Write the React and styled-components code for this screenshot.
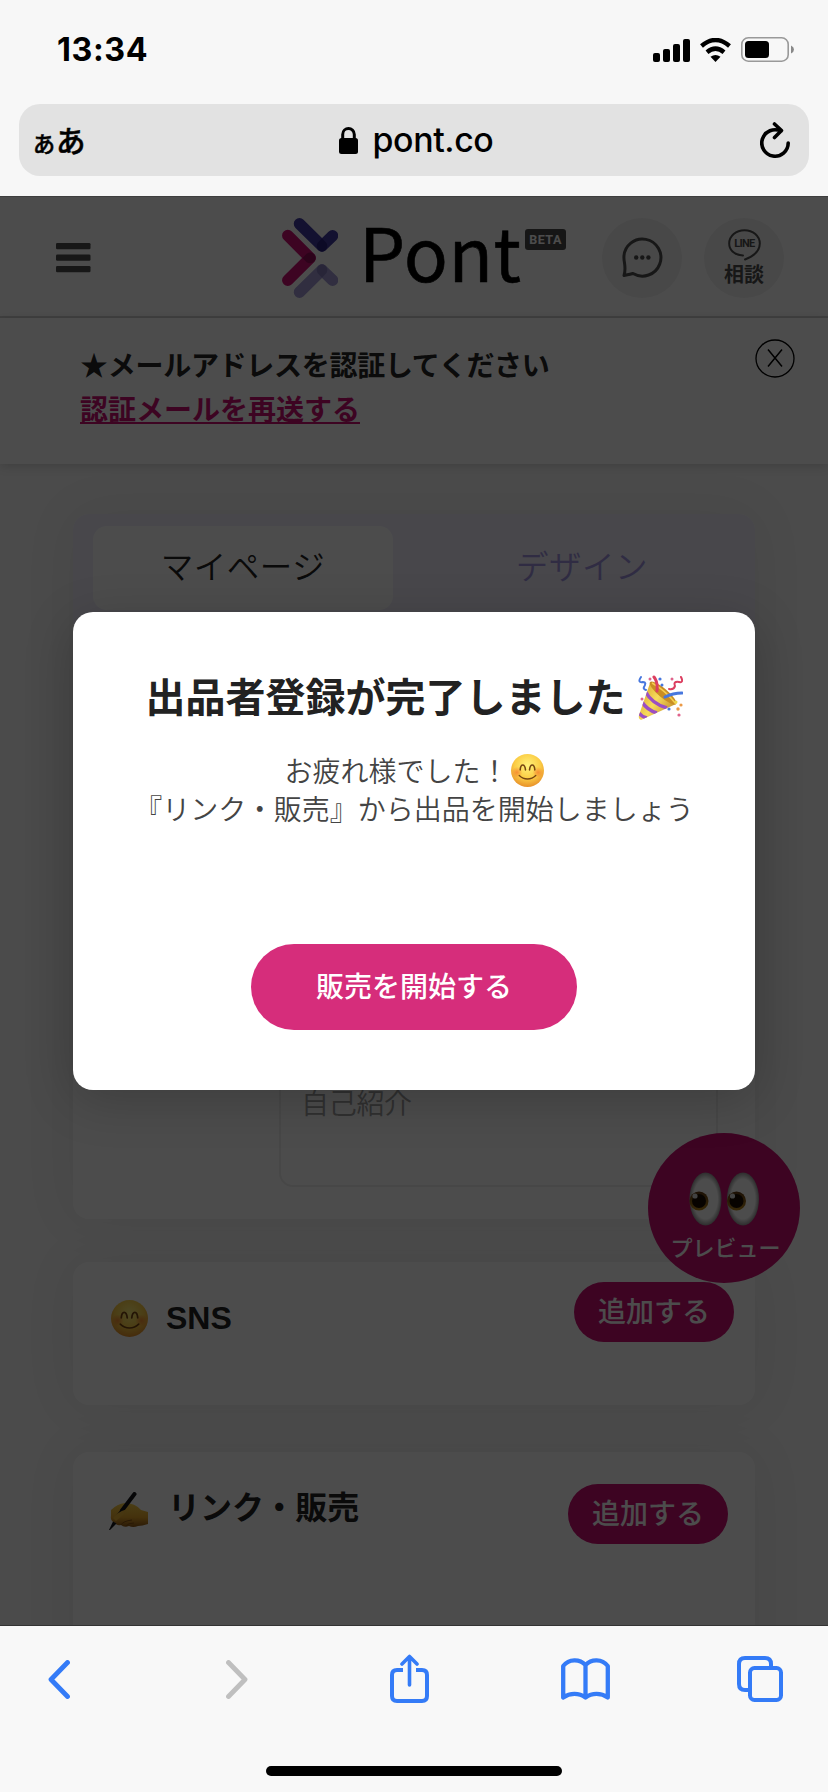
import React from "react";
import styled, { createGlobalStyle } from "styled-components";

const GlobalStyle = createGlobalStyle`
  *, *::before, *::after { box-sizing: border-box; }
  body { margin: 0; background: #f7f7f7; }
  button { border: 0; padding: 0; margin: 0; background: none; font: inherit; color: inherit; }
  svg { display: block; flex: none; }
`;

const JP = `"Liberation Sans", "Noto Sans CJK JP", sans-serif`;

const Phone = styled.div`
  width: 828px;
  height: 1792px;
  display: flex;
  flex-direction: column;
  overflow: hidden;
  background: #f7f7f7;
  font-family: ${JP};
`;

const StatusBar = styled.div`
  height: 104px;
  padding: 0 34px 5px 57px;
  display: flex;
  align-items: center;
  justify-content: space-between;
`;
const Clock = styled.div`
  padding-top: 1px;
  font: 700 32.3px/40px Inter, sans-serif;
  letter-spacing: 0.6px;
  color: #000;
`;
const StatusIcons = styled.div`
  display: flex;
  align-items: center;
  gap: 9px;
`;

const AddressBar = styled.div`
  height: 72px;
  margin: 0 19px 20px;
  padding: 0 19px 0 14px;
  border-radius: 21px;
  background: #e2e2e2;
  display: grid;
  grid-template-columns: 1fr auto 1fr;
  align-items: center;
  color: #000;
`;
const TextSize = styled.div`
  font: 500 29.5px/40px "Noto Sans CJK JP", sans-serif;
  -webkit-text-stroke: 0.5px #000;
  display: flex;
  align-items: baseline;
  gap: 1px;
  small { font-size: 22px; }
`;
const Host = styled.div`
  margin-left: 9px;
  display: flex;
  align-items: center;
  gap: 15px;
  font: 500 33.9px/44px Inter, sans-serif;
  letter-spacing: -0.4px;
`;
const Reload = styled.button`
  justify-self: end;
`;

const Viewport = styled.div`
  position: relative;
  height: 1430px;
  flex: none;
  overflow: hidden;
  background: #fafafa;
  border-bottom: 1px solid #333;
`;
const Header = styled.header`
  height: 122px;
  padding: 2px 44px 0 56px;
  background: #fff;
  border-top: 1px solid #d0d0d0;
  border-bottom: 2px solid #d4d4d4;
  display: flex;
  align-items: center;
`;
const Brand = styled.div`
  margin-left: 191px;
  display: flex;
  align-items: center;
  height: 80px;
`;
const BrandName = styled.div`
  margin-left: 21px;
  width: 166px;
  height: 80px;
  font: 400 73px/65px "Noto Sans CJK JP", sans-serif;
  letter-spacing: 0.5px;
  -webkit-text-stroke: 0.6px #000;
  color: #000;
  white-space: nowrap;
`;
const Beta = styled.div`
  align-self: flex-start;
  margin-top: 11px;
  width: 41px;
  height: 21px;
  border-radius: 3px;
  background: #4b4b4b;
  color: #fff;
  font: 700 12.5px/22px Roboto, sans-serif;
  letter-spacing: 0.5px;
  text-align: center;
`;
const RoundButton = styled.button`
  width: 80px;
  height: 80px;
  margin-left: ${(p) => p.$gap}px;
  border-radius: 50%;
  background: #f1f1f1;
  color: #4d4d4d;
  display: flex;
  flex-direction: column;
  align-items: center;
  justify-content: center;
  gap: 1px;
  font: 700 20px/24px "Noto Sans CJK JP", sans-serif;
`;

const Notice = styled.section`
  position: relative;
  height: 146px;
  padding: 27px 33px 0 80px;
  background: #fff;
  box-shadow: 0 2px 10px rgba(0, 0, 0, 0.16);
  display: flex;
  justify-content: space-between;
  font-weight: 700;
  font-size: 28px;
  line-height: 44px;
  letter-spacing: -0.28px;
  color: #262626;
`;
const NoticeText = styled.p`
  margin: 0;
  white-space: nowrap;
`;
const ResendLink = styled.a`
  display: block;
  width: 280px;
  height: 35px;
  line-height: 44px;
  letter-spacing: 0;
  color: #cb0e72;
  border-bottom: 2px solid #cb0e72;
`;
const CloseIcon = styled.button`
  height: 38px;
  margin-top: -6px;
`;

const Content = styled.main`
  padding: 50px 73px 0;
  display: flex;
  flex-direction: column;
`;
const Card = styled.section`
  height: ${(p) => p.$height}px;
  margin-bottom: ${(p) => p.$after}px;
  padding: ${(p) => p.$pad};
  border-radius: 16px;
  background: #fff;
  box-shadow: 0 0 54px rgba(0, 0, 0, 0.07);
  display: flex;
  justify-content: space-between;
  align-items: flex-start;
`;
const ProfileFrame = styled.div`
  height: 705px;
  margin-bottom: 43px;
  border-radius: 16px;
  box-shadow: 0 0 54px rgba(0, 0, 0, 0.07);
`;
const ProfileCard = styled.section`
  height: 100%;
  border-radius: 16px;
  overflow: hidden;
  background: #fff;
  display: flex;
  flex-direction: column;
`;
const Tabs = styled.nav`
  height: 110px;
  flex: none;
  padding: 12px 20px;
  background: #f0eefc;
  display: grid;
  grid-template-columns: 300px 1fr;
`;
const Tab = styled.button`
  height: 84px;
  padding-bottom: 6px;
  border-radius: 14px;
  background: ${(p) => (p.$active ? "#fff" : "transparent")};
  color: ${(p) => (p.$active ? "#222" : "#a095e0")};
  font: 350 32.5px/44px "Noto Sans CJK JP", sans-serif;
  letter-spacing: 0.5px;
  text-indent: ${(p) => (p.$active ? 0 : 36)}px;
`;
const Bio = styled.div`
  width: 439px;
  height: 160px;
  flex: none;
  margin: 403px 37px 0 auto;
  padding: 53px 20px 0;
  border: 2px solid #eee;
  border-radius: 14px;
  color: #a0a0a0;
  font: 350 28px/40px "Noto Sans CJK JP", sans-serif;
  letter-spacing: -0.3px;
`;
const SectionTitle = styled.h2`
  margin: ${(p) => p.$top}px 0 0;
  display: flex;
  align-items: center;
  gap: ${(p) => p.$gap}px;
  height: 40px;
  font-size: 32px;
  line-height: 40px;
  font-weight: 700;
  color: #242424;
`;
const IconDrop = styled.span`
  padding-top: 5px;
`;
const AddButton = styled.button`
  width: 160px;
  height: 60px;
  padding-bottom: 4px;
  border-radius: 30px;
  background: #cb0e72;
  color: #fff;
  font: 500 28px/40px "Noto Sans CJK JP", sans-serif;
`;
const PreviewButton = styled.button`
  position: absolute;
  left: 648px;
  top: 937px;
  width: 152px;
  height: 150px;
  padding: 39px 0 0;
  border-radius: 50%;
  background: #cb0e72;
  color: #fff;
  display: flex;
  flex-direction: column;
  align-items: center;
  gap: 6px;
  font: 500 22px/28px "Noto Sans CJK JP", sans-serif;
  white-space: nowrap;
`;
const PreviewLabel = styled.span`
  padding-left: 3px;
`;

const Overlay = styled.div`
  position: absolute;
  inset: 0;
  padding-top: 416px;
  background: rgba(0, 0, 0, 0.7);
  display: flex;
  justify-content: center;
  align-items: flex-start;
`;
const Modal = styled.div`
  width: 682px;
  height: 478px;
  padding-top: 60px;
  border-radius: 20px;
  background: #fff;
  box-shadow: 0 10px 50px rgba(0, 0, 0, 0.2);
  display: flex;
  flex-direction: column;
  align-items: center;
`;
const ModalTitle = styled.h1`
  margin: 0;
  display: flex;
  align-items: center;
  gap: 12px;
  font-size: 40px;
  line-height: 52px;
  font-weight: 700;
  color: #222;
`;
const ModalText = styled.div`
  margin-top: 27px;
  display: flex;
  flex-direction: column;
  align-items: center;
  font: 350 28px/38px "Noto Sans CJK JP", sans-serif;
  color: #444;
  white-space: nowrap;
`;
const TextLine = styled.div`
  height: 38px;
  display: flex;
  align-items: center;
  gap: 2px;
`;
const StartButton = styled.button`
  width: 326px;
  height: 86px;
  margin-top: 117px;
  padding-bottom: 5px;
  border-radius: 43px;
  background: #d62d7b;
  color: #fff;
  font: 500 28px/40px "Noto Sans CJK JP", sans-serif;
`;

const BrowserBar = styled.nav`
  flex: 1;
  background: #f8f8f8;
  display: flex;
  flex-direction: column;
  align-items: center;
  justify-content: space-between;
  padding: 25px 0 16px;
`;
const BarIcons = styled.div`
  width: 100%;
  height: 56px;
  padding-right: 9px;
  display: grid;
  grid-template-columns: repeat(5, 175.5px);
  justify-content: center;
  place-items: center;
`;
const ForwardSlot = styled.span`
  padding-left: 5px;
`;
const HomeIndicator = styled.div`
  width: 296px;
  height: 10px;
  border-radius: 5px;
  background: #000;
`;

const Smile = ({ size }) => (
  <svg width={size} height={size} viewBox="0 0 36 36">
    <defs>
      <radialGradient id="face" cx=".5" cy=".35" r=".65">
        <stop offset="0" stopColor="#fff27a" />
        <stop offset=".6" stopColor="#fbcd45" />
        <stop offset="1" stopColor="#e8912a" />
      </radialGradient>
      <radialGradient id="cheek">
        <stop offset="0" stopColor="#f4722b" stopOpacity=".7" />
        <stop offset="1" stopColor="#f4722b" stopOpacity="0" />
      </radialGradient>
    </defs>
    <circle cx="18" cy="18" r="18" fill="url(#face)" />
    <circle cx="6.5" cy="20" r="6" fill="url(#cheek)" />
    <circle cx="29.5" cy="20" r="6" fill="url(#cheek)" />
    <g fill="none" stroke="#764512" strokeLinecap="round">
      <path d="M10 17.3c.6-7 5-7 5.800 0M20.200 17.300c.8-7 5.200-7 5.800 0" strokeWidth="1.700" />
      <path d="M9 23.500c5 5 13 5 18 0" strokeWidth="1.500" />
    </g>
  </svg>
);

const Party = () => (
  <svg width="45" height="46" viewBox="0 0 45 46">
    <defs>
      <linearGradient id="cone" x1="0" y1=".2" x2="1" y2=".8">
        <stop offset="0" stopColor="#d9a52c" />
        <stop offset=".45" stopColor="#f7dc5c" />
        <stop offset="1" stopColor="#bd8425" />
      </linearGradient>
      <clipPath id="coneClip"><path d="M12 8 38 29 3 45Q0 44 1 40Z" /></clipPath>
    </defs>
    <path d="M12 8 38 29 3 45Q0 44 1 40Z" fill="url(#cone)" />
    <g clipPath="url(#coneClip)" fill="none" stroke="#9b4fc4" strokeWidth="3.400">
      <path d="M7 16Q14 29 29 33M4 27Q9 35 19 38M1 38Q4 42 9 43" />
    </g>
    <ellipse cx="25" cy="18" rx="17" ry="4.500" transform="rotate(40 25 18)" fill="#c98e23" />
    <path d="M14 8Q27 15 38 29" fill="none" stroke="#f5cd50" strokeWidth="1.500" />
    <g fill="none" strokeWidth="3" strokeLinecap="round">
      <path d="M16 2Q20 7 19 16" stroke="#dc3f60" />
      <path d="M27 22Q35 18 44 18" stroke="#4777de" />
      <path d="M3 2Q-1 8 5 7Q9 7 6 12Q5 14 8 15" stroke="#4777de" strokeWidth="2" />
      <path d="M43 2Q46 8 41 7Q35 6 37 11Q36 15 31 14" stroke="#dc3f60" strokeWidth="2" />
    </g>
    <g fill="#4777de"><circle cx="22" cy="4" r="1.600" /><circle cx="24" cy="10" r="1.500" /><circle cx="31" cy="34" r="1.600" /></g>
    <g fill="#df638b"><circle cx="12" cy="4" r="1.500" /><circle cx="34" cy="4" r="1.500" /><circle cx="4" cy="24" r="1.500" /><circle cx="41" cy="40" r="1.600" /></g>
    <g fill="#eb9a47"><circle cx="40" cy="34" r="1.700" /><circle cx="43" cy="30" r="1.600" /></g>
    <circle cx="38" cy="27" r="1.500" fill="#e9d84a" />
  </svg>
);

const WritingHand = () => (
  <svg width="40" height="38" viewBox="0 0 40 38">
    <defs>
      <linearGradient id="skin" x1="0" y1="0" x2="0" y2="1">
        <stop offset="0" stopColor="#fbd24a" />
        <stop offset=".6" stopColor="#e5a52b" />
        <stop offset="1" stopColor="#8f5715" />
      </linearGradient>
    </defs>
    <path d="M2 18Q8 12 16 11Q26 11 32 18L39 20V32Q33 34 29 34Q24 36 20 34Q15 36 12 33Q8 34 6 31Q1 29 2 24Z" fill="url(#skin)" />
    <path d="M12 33Q14 29 23 28M17 34Q19 31 25 31" fill="none" stroke="#8a5514" strokeWidth="1" />
    <path d="M25.500 2 13 18.500" fill="none" stroke="#15151a" strokeWidth="4" strokeLinecap="round" />
    <path d="M13 18.500 7 26" fill="none" stroke="#15151a" strokeWidth="3" />
    <path d="M4 29.500 7.500 31.500 1 38H0Z" fill="#15151a" />
    <path d="M4 26Q8 20 17 17.500L15 22 7 29Z" fill="#edb437" />
  </svg>
);

const Eyes = () => (
  <svg width="70" height="54" viewBox="0 0 70 54">
    <defs>
      <radialGradient id="ball"><stop offset=".75" stopColor="#fff" /><stop offset="1" stopColor="#999" /></radialGradient>
      <linearGradient id="iris" x1="0" y1="0" x2="0" y2="1"><stop offset="0" stopColor="#5d3610" /><stop offset="1" stopColor="#b9881c" /></linearGradient>
    </defs>
    {[16, 53.5].map((x) => (
      <g key={x}>
        <ellipse cx={x + 0.5} cy="27" rx="16" ry="26.500" fill="url(#ball)" />
        <circle cx={x - 6} cy="29" r="9.500" fill="url(#iris)" />
        <circle cx={x - 6} cy="29" r="7" fill="#180d02" />
        <circle cx={x - 10} cy="24" r="2.600" fill="#ddd" />
      </g>
    ))}
  </svg>
);

const Logo = () => (
  <svg width="56" height="80" viewBox="0 0 56 80" fill="none" strokeWidth="11.500" strokeLinecap="round" strokeLinejoin="round">
    <path d="M17.500 5.800 40 28 50.500 17.800" stroke="#423ba0" />
    <path d="M5.800 17.500 28.200 40 5.800 62.300" stroke="#cb0e72" />
    <path d="M17.500 74.200 40 52 50.500 62.200" stroke="#a39cd6" />
    <g stroke="none">
      <path d="M40 20.300 35.500 25Q33.500 29 36.500 32.300Q40 35 43.500 32.300Q46.500 29 44.500 25Z" fill="#2b2380" />
      <path d="M20.500 40 25 35.500Q29 33.300 32.300 36.500Q35 40 32.300 43.500Q29 46.500 25 44.500Z" fill="#950a59" />
      <path d="M40 59.700 35.500 55Q33.500 51 36.500 47.700Q40 45 43.500 47.700Q46.500 51 44.500 55Z" fill="#867dbd" />
    </g>
  </svg>
);

const Signal = () => (
  <svg width="37" height="24" viewBox="0 0 37 24" fill="#000">
    <rect y="15" width="7" height="9" rx="2" /><rect x="10" y="11" width="7" height="13" rx="2" />
    <rect x="20" y="6" width="7" height="18" rx="2" /><rect x="30" y="1" width="7" height="23" rx="2" />
  </svg>
);
const Wifi = () => (
  <svg width="33" height="24" viewBox="0 0 33 24">
    <path d="M2.500 8Q16.500-4 30.500 8M8 14.200Q16.500 7 25 14.200" fill="none" stroke="#000" strokeWidth="4.400" />
    <path d="M11.500 18.800Q16.500 15 21.500 18.800L16.500 24Z" fill="#000" />
  </svg>
);
const Battery = () => (
  <svg width="53" height="25" viewBox="0 0 53 25">
    <rect x=".8" y=".8" width="46.400" height="23.400" rx="6.500" fill="none" stroke="#999" strokeWidth="1.600" />
    <rect x="4" y="4" width="24" height="17" rx="3.500" fill="#000" />
    <path d="M50 8.500Q53 10 53 12.500T50 16.500Z" fill="#888" />
  </svg>
);

export default function App() {
  return (
    <>
      <GlobalStyle />
      <Phone>
        <StatusBar>
          <Clock>13:34</Clock>
          <StatusIcons><Signal /><Wifi /><Battery /></StatusIcons>
        </StatusBar>
        <AddressBar>
          <TextSize><small>あ</small>あ</TextSize>
          <Host>
            <svg width="19" height="27" viewBox="0 0 19 27">
              <rect y="11" width="19" height="16" rx="2.500" />
              <path d="M3.700 12V7.500C3.700-.4 15.300-.4 15.300 7.500V12" fill="none" stroke="#000" strokeWidth="3" />
            </svg>
            <span>pont.co</span>
          </Host>
          <Reload>
            <svg width="30" height="36" viewBox="0 0 30 36" fill="none" stroke="#000" strokeWidth="3.600" strokeLinecap="round" strokeLinejoin="round">
              <path d="M28.200 21A13.200 13.200 0 1 1 21 9.200M14.500 2 21.500 8.500 14.500 15.500" />
            </svg>
          </Reload>
        </AddressBar>

        <Viewport>
          <Header>
            <svg width="35" height="30" viewBox="0 0 35 30" fill="#4d4d4d">
              <rect y="0" width="34.500" height="6.200" rx="1.300" /><rect y="11.500" width="34.500" height="6.200" rx="1.300" /><rect y="23" width="34.500" height="6.200" rx="1.300" />
            </svg>
            <Brand>
              <Logo />
              <BrandName>Pont</BrandName>
              <Beta>BETA</Beta>
            </Brand>
            <RoundButton $gap={36}>
              <svg width="41" height="41" viewBox="0 0 41 41" fill="none" stroke="currentColor" strokeWidth="3" strokeLinejoin="round">
                <path d="M2 38.500C4.500 31 1.900 26 1.900 20.200A18.500 18.500 0 1 1 11 36.500Q9.500 37 2 38.500Z" />
                <g fill="currentColor" stroke="none"><circle cx="14.200" cy="20.500" r="2.200" /><circle cx="20.300" cy="20.500" r="2.200" /><circle cx="26.400" cy="20.500" r="2.200" /></g>
              </svg>
            </RoundButton>
            <RoundButton $gap={22}>
              <svg width="33" height="32" viewBox="0 0 33 32" fill="none" stroke="currentColor" strokeWidth="2" strokeLinecap="round">
                <path d="M15 26.500C5.500 26 1.200 20.500 1.200 14.500C1.200 7 8 1.200 16.500 1.200S31.800 7 31.800 14.500C31.800 22 25 27.500 17 30.500" />
                <text x="6.300" y="18.300" textLength="21" fontFamily="Roboto, sans-serif" fontWeight="700" fontSize="11" fill="currentColor" stroke="none">LINE</text>
              </svg>
              相談
            </RoundButton>
          </Header>
          <Notice>
            <NoticeText>
              ★メールアドレスを認証してください
              <ResendLink>認証メールを再送する</ResendLink>
            </NoticeText>
            <CloseIcon>
              <svg width="40" height="39" viewBox="0 0 40 39" fill="none" stroke="#000">
                <ellipse cx="20" cy="19.500" rx="19" ry="18.500" strokeWidth="1.300" />
                <path d="M13 10.500 27 27.500M27 10.500 13 27.500" strokeWidth="1.500" />
              </svg>
            </CloseIcon>
          </Notice>
          <Content>
            <ProfileFrame>
              <ProfileCard>
                <Tabs>
                  <Tab $active>マイページ</Tab>
                  <Tab>デザイン</Tab>
                </Tabs>
                <Bio>自己紹介</Bio>
              </ProfileCard>
            </ProfileFrame>
            <Card $height={143} $after={47} $pad="20px 21px 0 38px">
              <SectionTitle $top={16} $gap={18}><Smile size={37} />SNS</SectionTitle>
              <AddButton>追加する</AddButton>
            </Card>
            <Card $height={260} $after={0} $pad="32px 27px 0 36px">
              <SectionTitle $top={4} $gap={19}><IconDrop><WritingHand /></IconDrop>リンク・販売</SectionTitle>
              <AddButton>追加する</AddButton>
            </Card>
          </Content>
          <PreviewButton><Eyes /><PreviewLabel>プレビュー</PreviewLabel></PreviewButton>
          <Overlay>
            <Modal>
              <ModalTitle>出品者登録が完了しました<Party /></ModalTitle>
              <ModalText>
                <TextLine>お疲れ様でした！<Smile size={33} /></TextLine>
                <TextLine>『リンク・販売』から出品を開始しましょう</TextLine>
              </ModalText>
              <StartButton>販売を開始する</StartButton>
            </Modal>
          </Overlay>
        </Viewport>

        <BrowserBar>
          <BarIcons>
            <svg width="22" height="39" viewBox="0 0 22 39" fill="none" stroke="#347bf7" strokeWidth="4.800" strokeLinecap="round" strokeLinejoin="round"><path d="M19.500 2.500 3 19.500 19.500 36.500" /></svg>
            <ForwardSlot>
              <svg width="22" height="39" viewBox="0 0 22 39" fill="none" stroke="#bfbfbf" strokeWidth="4.800" strokeLinecap="round" strokeLinejoin="round"><path d="M2.500 2.500 19 19.500 2.500 36.500" /></svg>
            </ForwardSlot>
            <svg width="39" height="50" viewBox="0 0 39 50" fill="none" stroke="#347bf7" strokeWidth="4" strokeLinejoin="round">
              <path d="M13 16H7Q2 16 2 21V42Q2 47 7 47H32Q37 47 37 42V21Q37 16 32 16H26" />
              <path d="M19.500 31V2.500M12 10 19.500 2.500 27 10" strokeWidth="3.600" strokeLinecap="round" />
            </svg>
            <svg width="49" height="42" viewBox="0 0 49 42" fill="none" stroke="#347bf7" strokeWidth="4.300" strokeLinejoin="round">
              <path d="M2.200 39.500V8C8 .8 18.500.8 24.500 7C30.500.8 41 .8 46.800 8V39.500C40 34.700 31 34.700 24.500 39.500C18 34.700 9 34.700 2.200 39.500ZM24.500 7V39.500" />
            </svg>
            <svg width="47" height="46" viewBox="0 0 47 46" fill="none" stroke="#347bf7" strokeWidth="4">
              <path d="M12 34H8Q2 34 2 28V8Q2 2 8 2H28Q34 2 34 8V11" />
              <rect x="13" y="12" width="31" height="32" rx="4.500" />
            </svg>
          </BarIcons>
          <HomeIndicator />
        </BrowserBar>
      </Phone>
    </>
  );
}
